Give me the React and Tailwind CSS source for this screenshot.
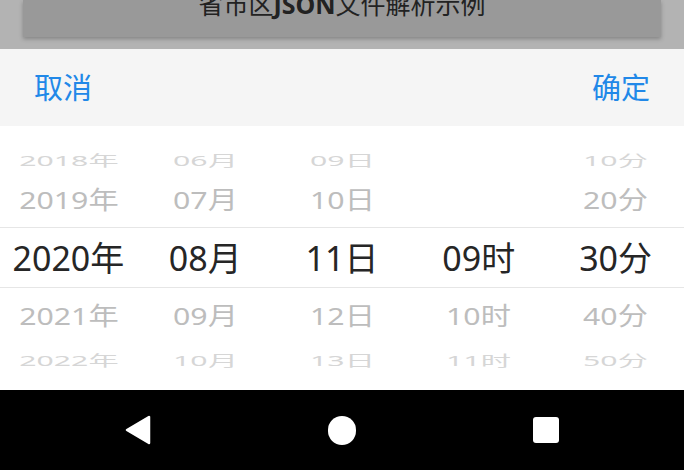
import React from 'react';

const FONT = { fontFamily: '"Noto Sans", "Noto Sans CJK SC", sans-serif' };

// wheel columns, top to bottom
const columns = [
  ['2018年', '2019年', '2020年', '2021年', '2022年'],
  ['06月', '07月', '08月', '09月', '10月'],
  ['09日', '10日', '11日', '12日', '13日'],
  ['', '', '09时', '10时', '11时'],
  ['10分', '20分', '30分', '40分', '50分'],
];

const rows = [
  { box: 'h-[28px]', text: 'text-[#d6d6d6] scale-x-[0.89] scale-y-[0.42]' },
  { box: 'h-[55px]', text: 'text-[#bdbdbd] scale-x-[0.89] scale-y-[0.72]' },
  { box: 'h-[61px] border-y border-[#e6e6e6]', text: 'text-[#262626]' },
  { box: 'h-[56px]', text: 'text-[#bdbdbd] scale-x-[0.89] scale-y-[0.72]' },
  { box: 'h-[30px]', text: 'text-[#d6d6d6] scale-x-[0.89] scale-y-[0.42]' },
];

const App = () => {
  return (
    <div className="w-[684px] h-[470px] flex flex-col overflow-hidden bg-[#b3b3b3]" style={FONT}>
      {/* dimmed page behind the sheet */}
      <div className="h-[49px] px-[23px]">
        <div className="h-[37px] bg-[#999999] shadow-[0_2px_4px_rgba(0,0,0,0.25)] flex justify-center overflow-hidden">
          <span className="text-[25px] leading-none -mt-[8px] text-[#222222]">
            省市区<b>JSON</b>文件解析示例
          </span>
        </div>
      </div>

      {/* toolbar */}
      <div className="h-[77px] bg-[#f5f5f5] flex items-center justify-between px-[34px] text-[29px] text-[#2188e8]">
        <span>取消</span>
        <span>确定</span>
      </div>

      {/* wheels */}
      <div className="h-[264px] bg-white pt-[18px]">
        {rows.map((row, r) => (
          <div key={r} className={`grid grid-cols-5 ${row.box}`}>
            {columns.map((col, c) => (
              <div key={c} className="flex items-center justify-center">
                <span className={`text-[34px] leading-none whitespace-nowrap ${row.text}`}>{col[r]}</span>
              </div>
            ))}
          </div>
        ))}
      </div>

      {/* android nav bar */}
      <div className="flex-1 bg-black flex items-center justify-center gap-[177px]">
        <svg width="26" height="30" viewBox="0 0 26 30">
          <path d="M24 2 L24 28 L2 15 Z" fill="white" stroke="white" strokeWidth="2.5" strokeLinejoin="round" />
        </svg>
        <div className="w-[28px] h-[29px] rounded-full bg-white" />
        <div className="w-[26px] h-[26px] rounded-[3px] bg-white" />
      </div>
    </div>
  );
};

export default App;
